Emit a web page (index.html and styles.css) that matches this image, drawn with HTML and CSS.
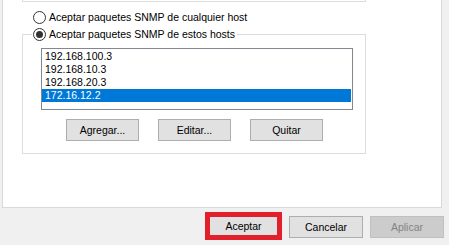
FILE: index.html
```html
<!DOCTYPE html>
<html lang="es">
<head>
    <meta charset="UTF-8">
    <title>Propiedades de SNMP - Seguridad</title>
    <link rel="stylesheet" href="styles.css">
</head>
<body>
    <div class="panel">
        <div class="prev-box"></div>

        <label class="radio-row first">
            <span class="radio"></span>
            <span>Aceptar paquetes SNMP de cualquier host</span>
        </label>

        <fieldset class="hosts-group">
            <legend>
                <label class="radio-row">
                    <span class="radio checked"></span>
                    <span>Aceptar paquetes SNMP de estos hosts</span>
                </label>
            </legend>

            <ul class="listbox">
                <li>192.168.100.3</li>
                <li>192.168.10.3</li>
                <li>192.168.20.3</li>
                <li class="selected">172.16.12.2</li>
            </ul>

            <div class="group-buttons">
                <button class="btn">Agregar...</button>
                <button class="btn">Editar...</button>
                <button class="btn">Quitar</button>
            </div>
        </fieldset>
    </div>

    <div class="dialog-buttons">
        <button class="btn marked">Aceptar</button>
        <button class="btn">Cancelar</button>
        <button class="btn" disabled>Aplicar</button>
    </div>
</body>
</html>
```

FILE: styles.css
```css
body {
    font-family: 'Liberation Sans', Arial, sans-serif;
    font-size: 10.5px;
    color: #000;
    background: #f0f0f0;
    margin: 0;
    padding: 0;
    width: 449px;
    height: 245px;
    overflow: hidden;
}
.panel {
    box-sizing: border-box;
    width: 440px;
    height: 208px;
    margin-left: 2px;
    padding-left: 19px;
    background: #fff;
    border: 1px solid #d9d9d9;
    border-top: none;
}
.prev-box {
    box-sizing: border-box;
    width: 344px;
    height: 2px;
    border: 1px solid #dcdcdc;
    border-top: none;
}
.radio-row {
    display: flex;
    align-items: center;
    gap: 3px;
    line-height: 13px;
}
.radio-row.first {
    margin: 9px 0 0 11px;
}
.radio {
    box-sizing: border-box;
    width: 13px;
    height: 13px;
    border: 1px solid #333;
    border-radius: 50%;
    background: #fff;
    display: flex;
    align-items: center;
    justify-content: center;
}
.radio.checked::after {
    content: "";
    width: 7px;
    height: 7px;
    border-radius: 50%;
    background: #333;
}
.hosts-group {
    box-sizing: border-box;
    width: 344px;
    height: 126px;
    margin: 4px 0 0 0;
    padding: 0;
    border: 1px solid #dcdcdc;
}
.hosts-group legend {
    margin-left: 9px;
    padding: 0 2px 0 1px;
}
.listbox {
    box-sizing: border-box;
    list-style: none;
    width: 312px;
    height: 62px;
    margin: 7px 0 0 18px;
    padding: 1px 1px 0 0;
    border: 1px solid #828790;
}
.listbox li {
    height: 13px;
    line-height: 13px;
    padding-left: 3px;
}
.listbox li.selected {
    background: #0078d7;
    color: #fff;
}
.group-buttons {
    display: flex;
    gap: 19px;
    margin: 9px 0 0 43px;
}
.btn {
    box-sizing: border-box;
    width: 73px;
    height: 22px;
    padding: 0;
    font-family: inherit;
    font-size: 10.5px;
    color: #000;
    background: #e1e1e1;
    border: 1px solid #adadad;
}
.btn:disabled {
    color: #838383;
    background: #cccccc;
    border-color: #bfbfbf;
}
.dialog-buttons {
    display: flex;
    align-items: flex-start;
    justify-content: flex-end;
    gap: 7px;
    margin-top: 8px;
    padding-right: 5px;
}
.dialog-buttons .btn {
    width: 74px;
}
.dialog-buttons .btn.marked {
    width: 77px;
    height: 28px;
    margin-top: -4px;
    border: 5px solid #e2202c;
}
```
